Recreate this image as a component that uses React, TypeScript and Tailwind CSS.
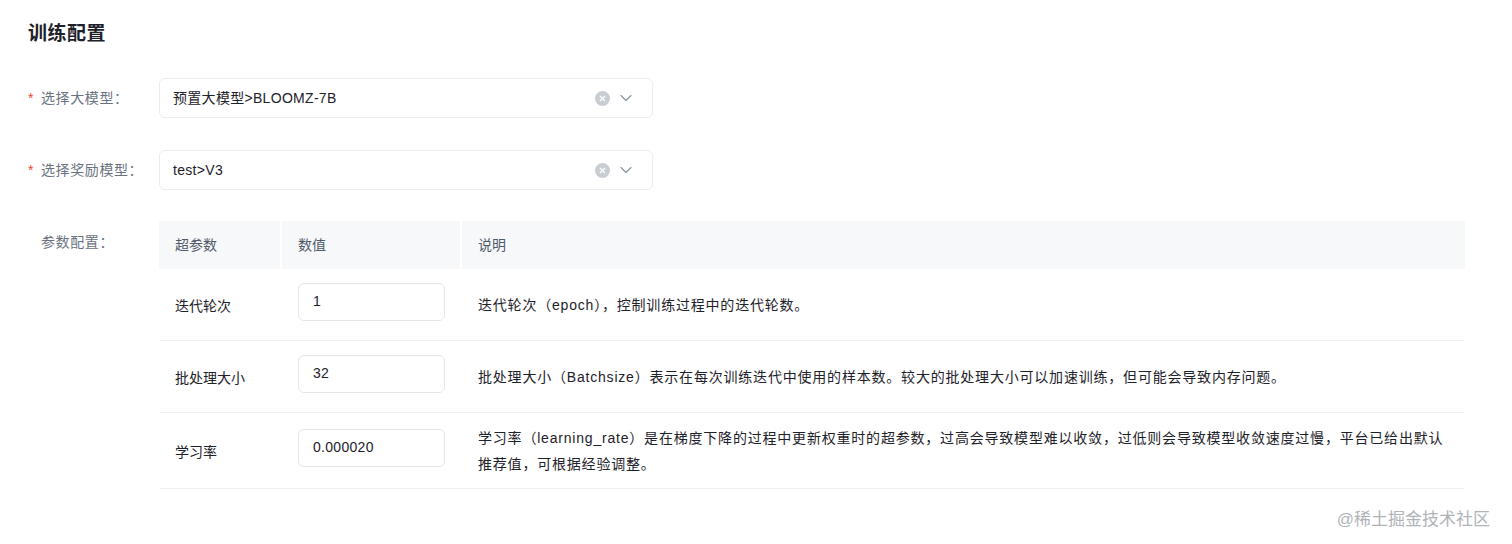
import { ChevronDown, X } from 'lucide-react';

const font = { fontFamily: '"Liberation Sans", "Noto Sans CJK SC", sans-serif' };

const params = [
  {
    name: '迭代轮次',
    value: '1',
    desc: '迭代轮次（epoch），控制训练过程中的迭代轮数。',
  },
  {
    name: '批处理大小',
    value: '32',
    desc: '批处理大小（Batchsize）表示在每次训练迭代中使用的样本数。较大的批处理大小可以加速训练，但可能会导致内存问题。',
  },
  {
    name: '学习率',
    value: '0.000020',
    desc: '学习率（learning_rate）是在梯度下降的过程中更新权重时的超参数，过高会导致模型难以收敛，过低则会导致模型收敛速度过慢，平台已给出默认推荐值，可根据经验调整。',
  },
];

const SelectBox = ({ value }: { value: string }) => (
  <div className="w-[494px] h-10 flex items-center rounded-md border border-[#ebedf0] bg-white pl-[13px] pr-[16px]">
    <span className="flex-1 text-[14px] tracking-[0.3px] text-[#1d2129]">{value}</span>
    <span className="w-[15px] h-[15px] rounded-full bg-[#c9cdd4] flex items-center justify-center mr-[6px]">
      <X size={9} strokeWidth={3} color="#fff" />
    </span>
    <ChevronDown size={20} strokeWidth={1.3} color="#86909c" />
  </div>
);

const FormLabel = ({ text, required }: { text: string; required?: boolean }) => (
  <div className="w-[159px] shrink-0 pl-[28px] flex items-center text-[14px] tracking-[0.6px] text-[#6b7280]">
    <span className="w-[13px] text-[#f53f3f]">{required ? '*' : ''}</span>
    <span>{text}</span>
  </div>
);

export default function App() {
  return (
    <div className="w-[1512px] h-[544px] bg-white relative" style={font}>
      <h2 className="pl-[28px] pt-[22px] text-[19px] leading-[24px] font-bold tracking-[0.5px] text-[#1d2129]">训练配置</h2>

      <div className="mt-[32px] flex items-center">
        <FormLabel text="选择大模型：" required />
        <SelectBox value="预置大模型>BLOOMZ-7B" />
      </div>

      <div className="mt-[32px] flex items-center">
        <FormLabel text="选择奖励模型：" required />
        <SelectBox value="test>V3" />
      </div>

      <div className="mt-[31px] flex">
        <div className="w-[159px] shrink-0 pl-[41px] pt-[11px] text-[14px] tracking-[0.6px] text-[#6b7280]">参数配置：</div>
        <div className="w-[1306px] text-[14px] text-[#1d2129]">
          <div className="flex h-12 items-center bg-[#f7f8fa] text-[#4e5969]">
            <div className="w-[123px] pl-4 border-r-2 border-white h-full flex items-center">超参数</div>
            <div className="w-[180px] pl-4 border-r-2 border-white h-full flex items-center">数值</div>
            <div className="flex-1 pl-4 h-full flex items-center">说明</div>
          </div>
          {params.map((p, i) => (
            <div
              key={p.name}
              className={`flex items-center border-b border-[#eef0f3] ${i === 2 ? 'h-[76px]' : 'h-[72px]'}`}
            >
              <div className="w-[123px] pl-4 pt-1">{p.name}</div>
              <div className="w-[180px] pl-[16px]">
                <div className="w-[147px] h-[38px] mb-[6px] rounded-md border border-[#e5e6eb] flex items-center pl-[14px] tracking-[0.3px]">
                  {p.value}
                </div>
              </div>
              <div className="flex-1 pl-4 pr-5 leading-[26px] tracking-[0.8px]">{p.desc}</div>
            </div>
          ))}
        </div>
      </div>

      <div className="absolute right-[22px] bottom-[12px] text-[17px] text-[#b0b3b8]">@稀土掘金技术社区</div>
    </div>
  );
}
